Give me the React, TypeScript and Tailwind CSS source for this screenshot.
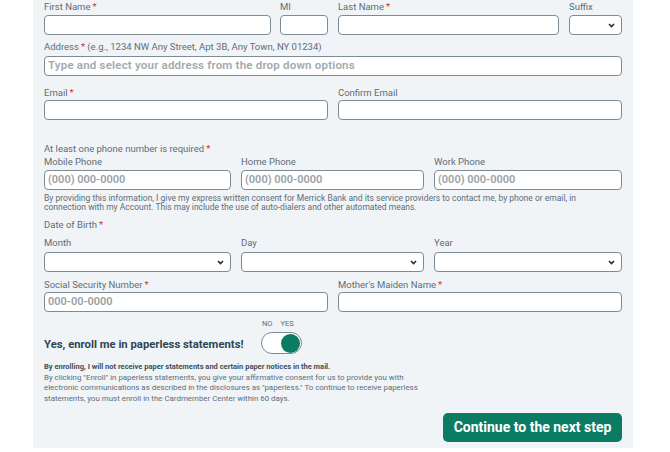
import React from "react";

const font = { fontFamily: "Roboto, 'Liberation Sans', sans-serif" };

const Req = () => <span className="text-[#c0392b] ml-[2px]">*</span>;

const Label = ({ children, req }: { children: React.ReactNode; req?: boolean }) => (
  <div className="h-[12px] leading-[13px] text-[9.5px] text-[#5d6d78] whitespace-nowrap">
    {children}
    {req && <Req />}
  </div>
);

const Input = ({ placeholder, big }: { placeholder?: string; big?: boolean }) => (
  <div className="h-[20px] w-full rounded-[4px] border border-[#7d8b94] bg-white flex items-center px-[3px] overflow-hidden">
    {placeholder && (
      <span
        className={
          big
            ? "text-[11.5px] font-semibold tracking-[0.2px] text-[#a3a9ad] whitespace-nowrap"
            : "text-[11px] font-semibold text-[#9ba1a5] whitespace-nowrap"
        }
      >
        {placeholder}
      </span>
    )}
  </div>
);

const Chevron = () => (
  <svg width="7" height="5" viewBox="0 0 7 5" className="shrink-0">
    <path d="M1 1l2.5 2.5L6 1" fill="none" stroke="#2a2a2a" strokeWidth="1.6" />
  </svg>
);

const Select = () => (
  <div className="h-[20px] w-full rounded-[4px] border border-[#7d8b94] bg-white flex items-center justify-end pr-[6px]">
    <Chevron />
  </div>
);

export default function App() {
  return (
    <div className="w-[670px] h-[452px] bg-white overflow-hidden" style={font}>
      <div className="ml-[33px] w-[600px] h-[448px] bg-[#f1f4f6] px-[11px] flex flex-col">
        {/* name row */}
        <div className="grid grid-cols-2 gap-[10px]">
          <div className="flex gap-[9px]">
            <div className="flex-1 flex flex-col gap-[3px]">
              <Label req>First Name</Label>
              <Input />
            </div>
            <div className="w-[48px] flex flex-col gap-[3px]">
              <Label>MI</Label>
              <Input />
            </div>
          </div>
          <div className="flex gap-[10px]">
            <div className="flex-1 flex flex-col gap-[3px]">
              <Label req>Last Name</Label>
              <Input />
            </div>
            <div className="w-[53px] flex flex-col gap-[3px]">
              <Label>Suffix</Label>
              <Select />
            </div>
          </div>
        </div>

        {/* address */}
        <div className="mt-[5px] flex flex-col gap-[4px]">
          <Label>
            Address<Req /> (e.g., 1234 NW Any Street, Apt 3B, Any Town, NY 01234)
          </Label>
          <Input big placeholder="Type and select your address from the drop down options" />
        </div>

        {/* email */}
        <div className="mt-[10px] grid grid-cols-2 gap-[10px]">
          <div className="flex flex-col gap-[2px]">
            <Label req>Email</Label>
            <Input />
          </div>
          <div className="flex flex-col gap-[2px]">
            <Label>Confirm Email</Label>
            <Input />
          </div>
        </div>

        {/* phones */}
        <div className="mt-[22px]">
          <Label req>At least one phone number is required</Label>
        </div>
        <div className="mt-[1px] grid grid-cols-[187px_183px_1fr] gap-x-[10px] gap-y-[3px]">
          <Label>Mobile Phone</Label>
          <Label>Home Phone</Label>
          <Label>Work Phone</Label>
          <Input placeholder="(000) 000-0000" />
          <Input placeholder="(000) 000-0000" />
          <Input placeholder="(000) 000-0000" />
        </div>
        <p className="mt-[4px] w-[545px] text-[8.5px] leading-[9px] text-[#5d6d78]">
          By providing this information, I give my express written consent for Merrick Bank and its service providers to
          contact me, by phone or email, in connection with my Account. This may include the use of auto-dialers and
          other automated means.
        </p>

        {/* date of birth */}
        <div className="mt-[6px]">
          <Label req>Date of Birth</Label>
        </div>
        <div className="mt-[6px] grid grid-cols-[187px_183px_1fr] gap-x-[10px] gap-y-[4px]">
          <Label>Month</Label>
          <Label>Day</Label>
          <Label>Year</Label>
          <Select />
          <Select />
          <Select />
        </div>

        {/* ssn / maiden name */}
        <div className="mt-[6px] grid grid-cols-2 gap-x-[10px] gap-y-[2px]">
          <Label req>Social Security Number</Label>
          <Label req>Mother's Maiden Name</Label>
          <Input placeholder="000-00-0000" />
          <Input />
        </div>

        {/* paperless toggle */}
        <div className="mt-[8px] flex items-end">
          <div className="w-[217px] pb-[3px] text-[11.3px] font-bold text-[#2f4553] leading-[13px] whitespace-nowrap">
            Yes, enroll me in paperless statements!
          </div>
          <div className="flex flex-col items-start">
            <div className="flex gap-[8px] pl-[1px] text-[7.5px] leading-[8px] text-[#5d6d78]">
              <span>NO</span>
              <span>YES</span>
            </div>
            <div className="mt-[4px] w-[41px] h-[22px] rounded-full border border-[#7d8b94] bg-white flex items-center justify-end pr-[1px]">
              <div className="w-[19px] h-[19px] rounded-full bg-[#0c7b64]" />
            </div>
          </div>
        </div>

        {/* disclosure */}
        <div className="mt-[8px] w-[374px] text-[7.9px] leading-[10.5px] text-[#5d6d78]">
          <div className="font-bold text-[7.5px] text-[#3f4f5a] whitespace-nowrap">
            By enrolling, I will not receive paper statements and certain paper notices in the mail.
          </div>
          <div>
            By clicking "Enroll" in paperless statements, you give your affirmative consent for us to provide you with
            electronic communications as described in the disclosures as "paperless." To continue to receive paperless
            statements, you must enroll in the Cardmember Center within 60 days.
          </div>
        </div>

        <div className="mt-[9px] flex justify-end">
          <button className="w-[179px] h-[29px] rounded-[5px] bg-[#0c7b64] text-white text-[14px] font-bold">
            Continue to the next step
          </button>
        </div>
      </div>
    </div>
  );
}
